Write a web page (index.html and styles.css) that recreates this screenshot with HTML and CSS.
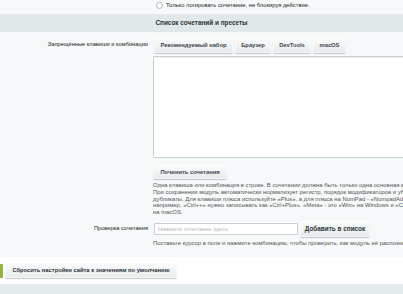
FILE: index.html
```html
<!DOCTYPE html>
<html lang="ru">
<head>
<meta charset="utf-8">
<link rel="stylesheet" href="styles.css">
</head>
<body>
<div class="page">
  <div class="form">
    <div class="top-row">
      <label class="radio-line"><span class="radio"></span>Только логировать сочетание, не блокируя действие.</label>
    </div>
    <div class="heading">Список сочетаний и пресеты</div>
    <div class="row row-first">
      <div class="label">Запрещённые клавиши и комбинации</div>
      <div class="field">
        <div class="btn-group">
          <button class="btn">Рекомендуемый набор</button>
          <button class="btn">Браузер</button>
          <button class="btn">DevTools</button>
          <button class="btn">macOS</button>
        </div>
        <textarea class="area"></textarea>
        <button class="btn btn-fix">Починить сочетания</button>
        <p class="help">Одна клавиша или комбинация в строке. В сочетании должна быть только одна основная клавиша.<br>При сохранении модуль автоматически нормализует регистр, порядок модификаторов и убирает<br>дубликаты. Для клавиши плюса используйте «Plus», а для плюса на NumPad - «NumpadAdd»,<br>например, «Ctrl++» нужно записывать как «Ctrl+Plus». «Meta» - это «Win» на Windows и «Cmd»<br>на macOS.</p>
      </div>
    </div>
    <div class="row row-second">
      <div class="label label-check">Проверка сочетания</div>
      <div class="field">
        <div class="check-line">
          <input class="input" type="text" placeholder="Нажмите сочетание здесь">
          <button class="btn btn-add">Добавить в список</button>
        </div>
        <p class="help help-check">Поставьте курсор в поле и нажмите комбинацию, чтобы проверить, как модуль её распознает.</p>
      </div>
    </div>
  </div>
  <div class="footer">
    <span class="mark"></span>
    <button class="btn btn-reset">Сбросить настройки сайта к значениям по умолчанию</button>
  </div>
  <div class="bottom"></div>
</div>
</body>
</html>
```
FILE: styles.css
```css
html, body {
  margin: 0;
  padding: 0;
}
body {
  width: 403px;
  height: 294px;
  overflow: hidden;
  font-family: "Liberation Sans", Arial, sans-serif;
  font-size: 5.7px;
  color: #000;
  background: #fff;
}
.page {
  width: 403px;
  overflow: hidden;
}
.form {
  background: #f5f9f9;
  height: 257px;
}
.top-row {
  height: 14px;
  padding-left: 156px;
  box-sizing: border-box;
  padding-top: 1px;
}
.radio-line {
  display: flex;
  align-items: center;
  gap: 3px;
  height: 8px;
  color: #222;
  white-space: nowrap;
  font-size: 5.8px;
}
.radio {
  width: 5px;
  height: 5px;
  border: 1px solid #a9b2b5;
  border-radius: 50%;
  background: #fff;
}
.heading {
  height: 18px;
  line-height: 18px;
  background: #e0e8ea;
  text-align: center;
  font-weight: bold;
  color: #2f3538;
  font-size: 6.4px;
}
.row {
  display: grid;
  grid-template-columns: 148px 600px;
  column-gap: 5px;
}
.row-first {
  padding-top: 6px;
}
.label {
  text-align: right;
  white-space: nowrap;
  padding-top: 2px;
  line-height: 8px;
  color: #222;
}
.field {
  display: flex;
  flex-direction: column;
  align-items: flex-start;
}
.btn-group {
  display: flex;
  gap: 2px;
  padding-left: 1px;
}
.btn {
  height: 15px;
  padding: 0 7px;
  border: none;
  border-radius: 2px;
  background: linear-gradient(#fbfcfc, #e4eaeb);
  box-shadow: 0 1px 1px rgba(0, 0, 0, 0.22), inset 0 0 0 1px rgba(255, 255, 255, 0.6);
  font-family: "Liberation Sans", Arial, sans-serif;
  font-size: 5.8px;
  font-weight: bold;
  color: #3c474e;
  white-space: nowrap;
  line-height: 15px;
}
.btn-group .btn:nth-child(1) { width: 79px; }
.btn-group .btn:nth-child(2) { width: 36px; }
.btn-group .btn:nth-child(3) { width: 38px; }
.btn-group .btn:nth-child(4) { width: 33px; }
.btn-group .btn {
  padding: 0;
}
.area {
  display: block;
  margin-top: 3px;
  width: 600px;
  height: 102px;
  box-sizing: border-box;
  border: 1px solid #c8cfd1;
  border-radius: 1px;
  background: #fff;
  box-shadow: inset 0 1px 1px rgba(0, 0, 0, 0.06);
  resize: none;
}
.btn-fix {
  margin-top: 7px;
  height: 14px;
  line-height: 14px;
  width: 74px;
  padding: 0;
}
.help {
  margin: 3px 0 0;
  color: #555;
  line-height: 6.8px;
  white-space: nowrap;
  font-size: 5.9px;
}
.row-second {
  padding-top: 5px;
}
.label-check {
  padding-top: 3px;
}
.check-line {
  display: flex;
  align-items: center;
  gap: 2px;
}
.input {
  width: 144px;
  height: 12px;
  box-sizing: border-box;
  border: 1px solid #c8cfd1;
  border-radius: 1px;
  background: #fff;
  padding: 0 3px;
  font-family: "Liberation Sans", Arial, sans-serif;
  font-size: 5.8px;
  margin-left: 1px;
}
.input::placeholder {
  color: #b5babd;
}
.btn-add {
  height: 16px;
  line-height: 16px;
  font-size: 6.4px;
  color: #2c3338;
  width: 70px;
  padding: 0;
}
.help-check {
  margin-top: 3px;
}
.footer {
  height: 27px;
  display: flex;
  align-items: center;
  gap: 2px;
  background: #fff;
}
.mark {
  width: 3px;
  height: 14px;
  background: #8fb635;
  border-radius: 0 1px 1px 0;
}
.btn-reset {
  width: 172px;
  height: 15px;
  line-height: 15px;
  padding: 0;
  color: #2c3338;
}
.bottom {
  height: 10px;
  background: #e5ebed;
}
```
